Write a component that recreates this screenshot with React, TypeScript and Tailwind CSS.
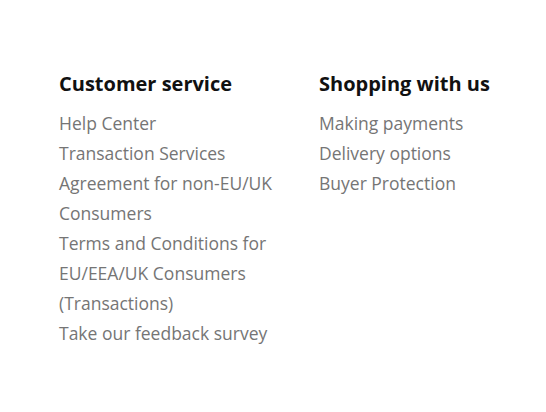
const customer = [
  'Help Center',
  'Transaction Services',
  'Agreement for non-EU/UK Consumers',
  'Terms and Conditions for EU/EEA/UK Consumers (Transactions)',
  'Take our feedback survey',
];

const shopping = ['Making payments', 'Delivery options', 'Buyer Protection'];

function Column({ title, links, className }: { title: string; links: string[]; className: string }) {
  return (
    <div className={className}>
      <h3 className="text-[20px] font-bold leading-[28px] text-[#111]">{title}</h3>
      <ul className="mt-[10px]">
        {links.map(l => (
          <li key={l}>
            <a href="#" className="text-[17.5px] leading-[30px] text-[#757575]">
              {l}
            </a>
          </li>
        ))}
      </ul>
    </div>
  );
}

export default function App() {
  return (
    <div
      className="min-h-[412px] bg-white pl-[59px] pr-[20px] pt-[70px]"
      style={{ fontFamily: '"Open Sans", sans-serif' }}
    >
      <div className="flex gap-[30px]">
        <Column className="w-[230px] shrink-0" title="Customer service" links={customer} />
        <Column className="flex-1" title="Shopping with us" links={shopping} />
      </div>
    </div>
  );
}
